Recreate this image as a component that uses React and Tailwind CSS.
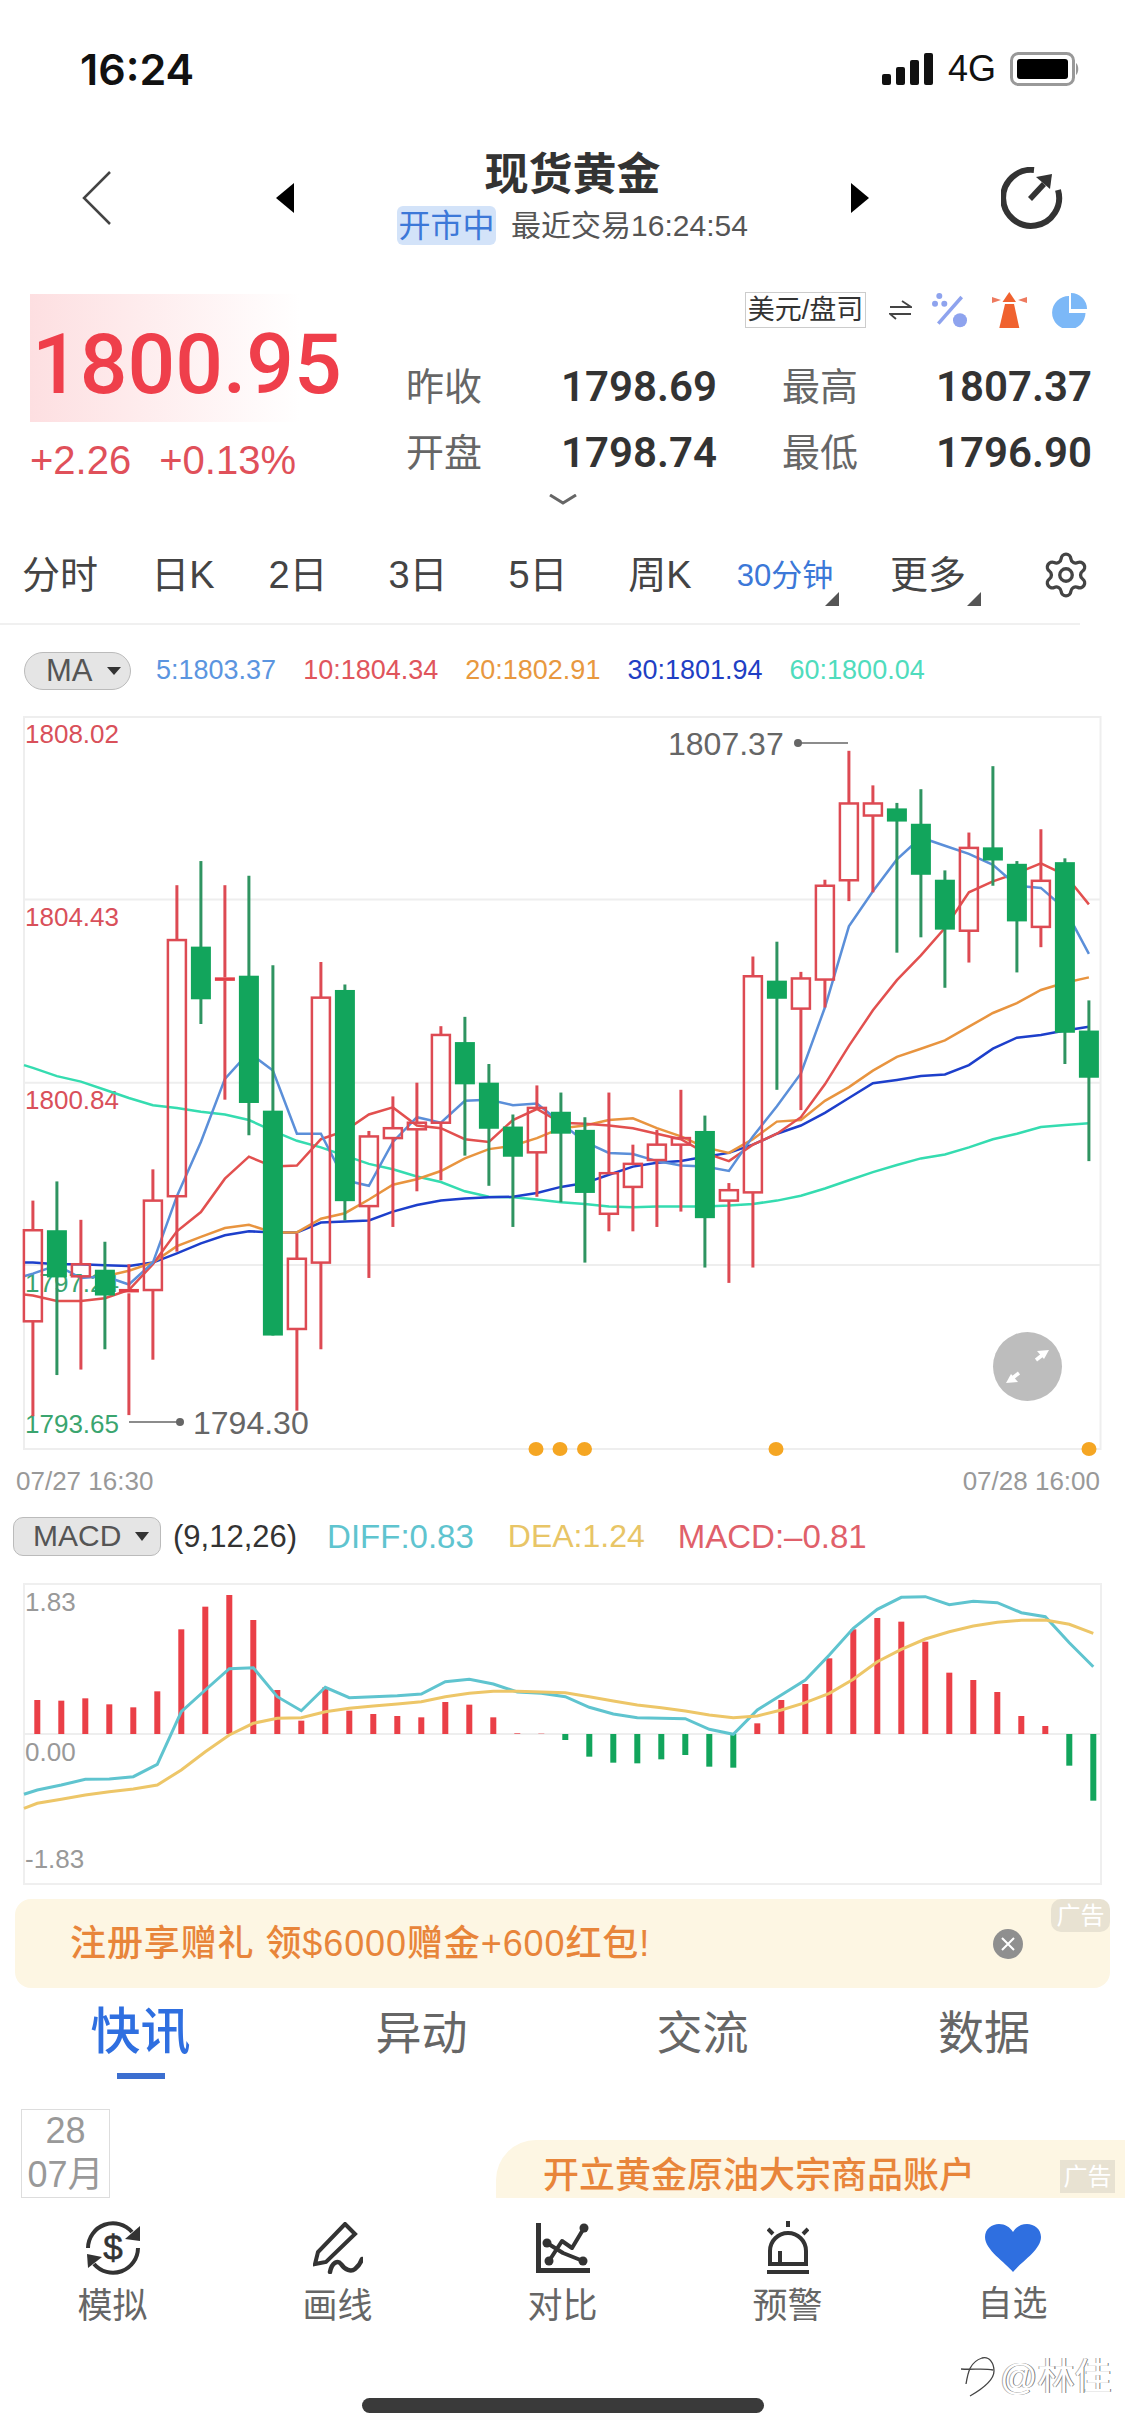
import { Settings } from "lucide-react";

// raw values are read off the 2.8x zoom of the chart, py() turns them into page pixels
const py = (z) => 640 + z / 1.823;
const cx = (i) => 32.9 + 24 * i;
const my = (z) => 1480 + z / 3;
const mx = (i) => 37.3 + 24 * i;

// [high, bodyTop, bodyBottom, low, up]
const candles = [
  [1022, 1076, 1242, 1415, 1], [987, 1076, 1162, 1340, 0], [1057, 1138, 1160, 1330, 1], [1097, 1148, 1195, 1293, 0],
  [1138, 1183, 1191, 1413, 1], [965, 1022, 1185, 1312, 1], [447, 547, 1014, 1115, 1], [403, 559, 655, 700, 0],
  [447, 615, 621, 838, 1], [430, 612, 844, 903, 0], [593, 858, 1268, 1268, 0], [1082, 1128, 1256, 1405, 1],
  [587, 652, 1135, 1293, 1], [628, 638, 1023, 1058, 0], [895, 905, 1032, 1163, 1], [832, 890, 908, 1070, 1],
  [807, 880, 892, 1005, 1], [704, 720, 880, 985, 1], [687, 733, 810, 940, 0], [773, 807, 891, 995, 0],
  [865, 887, 942, 1070, 0], [812, 853, 934, 1015, 1], [825, 860, 900, 1025, 0], [870, 893, 1008, 1135, 0],
  [825, 972, 1046, 1078, 1], [920, 955, 997, 1078, 1], [893, 920, 948, 1070, 1], [820, 908, 920, 1042, 1],
  [867, 895, 1054, 1144, 0], [990, 1003, 1022, 1172, 1], [577, 613, 1007, 1144, 1], [550, 621, 654, 820, 0],
  [605, 617, 672, 857, 1], [437, 448, 619, 670, 1], [202, 298, 438, 476, 1], [265, 298, 320, 460, 1],
  [297, 307, 331, 570, 0], [272, 335, 428, 542, 0], [420, 437, 528, 634, 0], [351, 379, 530, 588, 1],
  [230, 378, 402, 448, 0], [403, 408, 513, 606, 0], [345, 439, 523, 560, 1], [398, 405, 716, 773, 0],
  [657, 712, 798, 950, 0],
];

const ma5 = [1155, 1140, 1163, 1160, 1175, 1135, 1014, 915, 800, 752, 785, 900, 900, 985, 995, 915, 870, 880, 840, 838, 848, 845, 880, 915, 935, 937, 950, 958, 960, 968, 905, 850, 790, 670, 522, 458, 400, 360, 375, 390, 410, 448, 452, 490, 572];
const ma10 = [1195, 1205, 1205, 1200, 1185, 1138, 1078, 1043, 982, 942, 960, 958, 910, 895, 865, 852, 885, 890, 910, 915, 875, 855, 880, 882, 885, 890, 900, 910, 935, 950, 920, 900, 870, 810, 740, 675, 620, 575, 525, 460, 440, 425, 407, 428, 482];
const ma20 = [null, null, null, 1160, 1150, 1135, 1105, 1088, 1072, 1066, 1080, 1080, 1055, 1045, 1020, 993, 983, 968, 945, 928, 922, 908, 890, 885, 875, 872, 890, 905, 925, 935, 910, 878, 875, 840, 815, 785, 760, 745, 730, 705, 680, 662, 638, 625, 615];
const ma30 = [1135, 1138, 1138, 1140, 1141, 1135, 1118, 1100, 1085, 1078, 1080, 1080, 1062, 1060, 1058, 1042, 1030, 1022, 1018, 1016, 1015, 1008, 997, 990, 975, 960, 953, 950, 942, 935, 920, 900, 885, 862, 835, 808, 802, 795, 792, 775, 745, 725, 720, 712, 705];
const ma60 = [780, 795, 805, 820, 835, 848, 853, 860, 865, 875, 895, 913, 925, 940, 955, 965, 978, 988, 1005, 1015, 1016, 1020, 1025, 1028, 1033, 1034, 1033, 1033, 1033, 1031, 1028, 1022, 1013, 1000, 985, 970, 957, 945, 938, 925, 910, 900, 888, 884, 881];

const macdBars = [660, 662, 655, 673, 682, 634, 448, 380, 345, 420, 630, 722, 622, 692, 702, 708, 712, 666, 674, 712, 760, 761, 780, 830, 848, 850, 838, 825, 860, 863, 730, 660, 612, 535, 448, 414, 425, 485, 578, 600, 636, 708, 738, 857, 962];
const diff = [930, 915, 898, 897, 890, 853, 695, 630, 566, 563, 650, 692, 622, 653, 650, 647, 642, 605, 598, 612, 636, 640, 650, 682, 702, 713, 715, 716, 748, 763, 690, 645, 600, 525, 445, 388, 352, 350, 374, 364, 368, 398, 410, 488, 560];
const dea = [970, 958, 945, 935, 927, 915, 870, 815, 765, 730, 715, 713, 695, 685, 678, 672, 665, 650, 640, 634, 634, 636, 638, 650, 663, 675, 683, 693, 705, 713, 708, 690, 668, 640, 598, 545, 508, 477, 455, 438, 427, 421, 420, 433, 460];

const linePoints = (values, startY) => {
  const pts = values
    .map((v, i) => (v === null ? null : `${cx(i).toFixed(1)},${py(v).toFixed(1)}`))
    .filter(Boolean)
    .join(" ");
  return startY ? `24,${py(startY).toFixed(1)} ${pts}` : pts;
};

const macdPoints = (values, startY) =>
  `24,${my(startY).toFixed(1)} ` + values.map((v, i) => `${mx(i).toFixed(1)},${my(v).toFixed(1)}`).join(" ");

const maLegend = [
  { text: "5:1803.37", cls: "text-[#5b95e0]" },
  { text: "10:1804.34", cls: "text-[#e0555c]" },
  { text: "20:1802.91", cls: "text-[#e8983f]" },
  { text: "30:1801.94", cls: "text-[#1f3fc4]" },
  { text: "60:1800.04", cls: "text-[#4fdcbd]" },
];

const periods = [
  { label: "分时", cls: "w-[120px]" },
  { label: "日K", cls: "w-[126px]" },
  { label: "2日", cls: "w-[104px]" },
  { label: "3日", cls: "w-[136px]" },
  { label: "5日", cls: "w-[104px]" },
  { label: "周K", cls: "w-[140px]" },
];

function CornerMark({ cls }) {
  return (
    <svg width="14" height="14" viewBox="0 0 14 14" className={`absolute top-[65px] ${cls}`}>
      <polygon points="14,0 14,14 0,14" fill="#555" />
    </svg>
  );
}

function CandleChart() {
  return (
    <svg width="1125" height="750" viewBox="0 710 1125 750" className="block shrink-0">
      <rect x="24" y="717" width="1076.5" height="732" fill="none" stroke="#eeeeee" strokeWidth="2" />
      {[899.5, 1082.7, 1265].map((y) => (
        <line key={y} x1="24" x2="1100" y1={y} y2={y} stroke="#eeeeee" strokeWidth="2" />
      ))}

      <text x="25" y="743" fontSize="26" fill="#d9505a">1808.02</text>
      <text x="25" y="926" fontSize="26" fill="#d9505a">1804.43</text>
      <text x="25" y="1109" fontSize="26" fill="#d9505a">1800.84</text>
      <text x="25" y="1292" fontSize="26" fill="#3aa56f">1797.24</text>
      <text x="25" y="1433" fontSize="26" fill="#3aa56f">1793.65</text>

      <polyline points={linePoints(ma60, 775)} fill="none" stroke="#35dcb0" strokeWidth="2.5" />
      <polyline points={linePoints(ma30, 1135)} fill="none" stroke="#1d3fcb" strokeWidth="2.5" />
      <polyline points={linePoints(ma20)} fill="none" stroke="#e8943f" strokeWidth="2.5" />
      <polyline points={linePoints(ma10, 1193)} fill="none" stroke="#e2504f" strokeWidth="2.5" />
      <polyline points={linePoints(ma5, 1160)} fill="none" stroke="#5b8fd9" strokeWidth="2.5" />

      {candles.map(([high, top, bottom, low, up], i) => {
        const x = cx(i);
        if (up) {
          const flat = bottom - top < 10;
          return (
            <g key={i} stroke="#dd4a53">
              <line x1={x} x2={x} y1={py(high)} y2={py(top)} strokeWidth="3" />
              <line x1={x} x2={x} y1={py(bottom)} y2={py(low)} strokeWidth="3" />
              {flat ? (
                <rect x={x - 10} y={py(top)} width="20" height="3.5" fill="#e23f48" stroke="none" />
              ) : (
                <rect x={x - 9} y={py(top)} width="18" height={py(bottom) - py(top)} fill="none" strokeWidth="2.5" />
              )}
            </g>
          );
        }
        return (
          <g key={i}>
            <line x1={x} x2={x} y1={py(high)} y2={py(low)} stroke="#2f9461" strokeWidth="3" />
            <rect x={x - 10} y={py(top)} width="20" height={py(bottom) - py(top)} fill="#12a55c" />
          </g>
        );
      })}

      <line x1="129" x2="177" y1="1422" y2="1422" stroke="#666" strokeWidth="1.5" />
      <circle cx="180" cy="1422" r="4" fill="#666" />
      <text x="193" y="1434" fontSize="32" fill="#666">1794.30</text>

      <text x="668" y="755" fontSize="32" fill="#666">1807.37</text>
      <circle cx="798" cy="743" r="4" fill="#666" />
      <line x1="800" x2="848" y1="743" y2="743" stroke="#666" strokeWidth="1.5" />

      {[536, 560, 584.5, 776, 1089].map((x) => (
        <ellipse key={x} cx={x} cy="1449" rx="7.5" ry="7" fill="#f5a623" />
      ))}

      <circle cx="1027.5" cy="1366.5" r="34.5" fill="#bdbdbd" />
      <g stroke="#fff" strokeWidth="3.5" fill="#fff">
        <line x1="1036" y1="1360" x2="1045" y2="1353" />
        <polygon points="1049,1350 1037,1351 1044,1359" stroke="none" />
        <line x1="1019" y1="1373" x2="1010" y2="1380" />
        <polygon points="1006,1383 1018,1382 1011,1374" stroke="none" />
      </g>
    </svg>
  );
}

function MacdChart() {
  return (
    <svg width="1125" height="325" viewBox="0 1570 1125 325" className="block shrink-0">
      <rect x="24" y="1584" width="1077" height="300" fill="none" stroke="#efefef" strokeWidth="2" />
      <line x1="24" x2="1100" y1="1734" y2="1734" stroke="#eeeeee" strokeWidth="2" />
      <text x="25" y="1611" fontSize="26" fill="#999">1.83</text>
      <text x="25" y="1761" fontSize="26" fill="#999">0.00</text>
      <text x="25" y="1868" fontSize="26" fill="#999">-1.83</text>

      {macdBars.map((v, i) => {
        const up = v < 762;
        const top = up ? my(v) : 1734;
        const height = up ? 1734 - my(v) : my(v) - 1734;
        return <rect key={i} x={mx(i) - 3} y={top} width="6" height={height} fill={up ? "#ea3f47" : "#12a55c"} />;
      })}

      <polyline points={macdPoints(diff, 943)} fill="none" stroke="#5fc4cf" strokeWidth="3" />
      <polyline points={macdPoints(dea, 985)} fill="none" stroke="#edc668" strokeWidth="3" />
    </svg>
  );
}

function IconSim() {
  return (
    <svg width="54" height="54" viewBox="0 0 54 54" fill="none" stroke="#333" strokeWidth="4">
      <path d="M2 27 A25 25 0 0 1 46 11" />
      <polygon points="54,5 54,20 39,18" fill="#333" stroke="none" />
      <path d="M52 27 A25 25 0 0 1 8 43" />
      <polygon points="1,33 16,36 2,47" fill="#333" stroke="none" />
      <text x="27" y="39" fontSize="35" fill="#333" stroke="#333" strokeWidth="0.6" textAnchor="middle">$</text>
    </svg>
  );
}

function IconPen() {
  return (
    <svg width="50" height="52" viewBox="0 0 50 52" fill="none" stroke="#333" strokeWidth="4">
      <path d="M32 2 L42 12 L13 40 L2 42 L5 30 Z" />
      <path d="M17 50 C19 40 25 38 28 42 C32 48 38 50 42 47 C46 44 48 40 49 37" strokeWidth="4.5" strokeLinecap="round" />
    </svg>
  );
}

function IconCompare() {
  return (
    <svg width="54" height="50" viewBox="0 0 54 50" fill="none" stroke="#333">
      <path d="M2.5 0 V47.5 H54" strokeWidth="5" />
      <g strokeWidth="4" strokeLinejoin="round">
        <polyline points="11,20 27,30 47,38" />
        <polyline points="13,38 26,18 36,25 48,5" />
      </g>
      <g fill="#333" stroke="none">
        <circle cx="11" cy="20" r="4.5" />
        <circle cx="47" cy="38" r="4.5" />
        <circle cx="13" cy="38" r="4.5" />
        <circle cx="48" cy="5" r="4.5" />
      </g>
    </svg>
  );
}

function IconAlarm() {
  return (
    <svg width="42" height="54" viewBox="0 0 42 54" fill="none" stroke="#333" strokeWidth="4">
      <path d="M21 0 V6 M1 8 L6 13 M41 8 L36 13" />
      <path d="M3 43 V30 A18 18 0 0 1 39 30 V43 Z" />
      <path d="M13 43 V30" />
      <path d="M0 51 H42" />
    </svg>
  );
}

function IconHeart() {
  return (
    <svg width="56" height="48" viewBox="0 0 56 48">
      <path d="M28 48 C20 38 0 26 0 13 C0 5 7 0 14 0 C20 0 25 3 28 8 C31 3 36 0 42 0 C49 0 56 5 56 13 C56 26 36 38 28 48 Z" fill="#2f6fe0" />
    </svg>
  );
}

const bottomTabs = [
  { label: "模拟", Icon: IconSim, cls: "mt-[9px]" },
  { label: "画线", Icon: IconPen, cls: "mt-[9px]" },
  { label: "对比", Icon: IconCompare, cls: "mt-[9px]" },
  { label: "预警", Icon: IconAlarm, cls: "mt-[9px]" },
  { label: "自选", Icon: IconHeart, cls: "mt-[7px]" },
];

export default function App() {
  return (
    <div className="relative flex h-[2436px] w-[1125px] flex-col overflow-hidden bg-white font-['Liberation_Sans','Noto_Sans_CJK_SC',sans-serif]">
      {/* Status bar */}
      <div className="flex h-[138px] shrink-0 items-center pl-[80px] pr-[45px]">
        <span className="font-['Inter'] text-[43px] font-semibold leading-none text-[#111]">16:24</span>
        <div className="ml-auto flex items-center">
          <svg width="52" height="32" viewBox="0 0 52 32" fill="#111">
            <rect x="0" y="21" width="9" height="11" rx="2" />
            <rect x="14" y="14" width="9" height="18" rx="2" />
            <rect x="28" y="7" width="9" height="25" rx="2" />
            <rect x="42" y="0" width="9" height="32" rx="2" />
          </svg>
          <span className="ml-[14px] text-[36px] leading-none text-[#111]">4G</span>
          <svg className="ml-[14px]" width="70" height="34" viewBox="0 0 70 34">
            <rect x="1.5" y="1.5" width="62" height="31" rx="7" fill="none" stroke="#999" strokeWidth="3" />
            <rect x="7" y="7" width="51" height="20" rx="3" fill="#000" />
            <path d="M66 11 C69 13 69 21 66 23 Z" fill="#999" />
          </svg>
        </div>
      </div>

      {/* Nav */}
      <div className="flex h-[124px] shrink-0 items-start">
        <svg className="ml-[82px] mt-[33px]" width="30" height="54" viewBox="0 0 30 54" fill="none" stroke="#444" strokeWidth="2.5">
          <polyline points="28,1 2,27 28,53" />
        </svg>
        <svg className="ml-[164px] mt-[45px]" width="18" height="30" viewBox="0 0 18 30">
          <polygon points="18,0 18,30 0,15" fill="#000" />
        </svg>
        <div className="flex w-[557px] flex-col items-center">
          <span className="mt-[12px] text-[44px] font-bold leading-[50px] text-[#333]">现货黄金</span>
          <div className="mt-[6px] flex items-center">
            <span className="flex h-[39px] w-[99px] items-center justify-center rounded-[6px] bg-[#d3e3f9] text-[32px] leading-none text-[#3c78d8]">开市中</span>
            <span className="ml-[15px] text-[30px] leading-none text-[#555]">最近交易16:24:54</span>
          </div>
        </div>
        <svg className="mt-[45px]" width="18" height="30" viewBox="0 0 18 30">
          <polygon points="0,0 0,30 18,15" fill="#000" />
        </svg>
        <svg className="ml-[132px] mt-[29px]" width="62" height="62" viewBox="0 0 62 62" fill="none" stroke="#333" strokeWidth="6">
          <path d="M33 3 A28 28 0 1 0 57 23" />
          <path d="M29 32 L43 17" strokeWidth="5.5" />
          <polygon points="51,7 35,10 49,22" fill="#333" stroke="none" />
        </svg>
      </div>

      {/* Quote */}
      <div className="flex h-[243px] shrink-0">
        <div className="w-[345px] shrink-0 pl-[30px] pt-[32px]">
          <div className="flex h-[128px] w-[270px] items-center whitespace-nowrap bg-gradient-to-r from-[#fddfe1] to-white pl-[2px] pt-[14px] font-['Roboto'] text-[84px] font-medium leading-none text-[#ef3f4b]">
            1800.95
          </div>
          <div className="flex h-[76px] items-center text-[40px] leading-none text-[#e0505a]">
            <span>+2.26</span>
            <span className="ml-[28px]">+0.13%</span>
          </div>
        </div>
        <div className="flex flex-1 flex-col">
          <div className="flex items-center justify-end pr-[38px] pt-[29px]">
            <span className="flex h-[36px] w-[121px] items-center justify-center border border-[#cccccc] text-[27px] leading-none text-[#333]">美元/盘司</span>
            <svg className="ml-[23px]" width="23" height="20" viewBox="0 0 23 20" fill="none" stroke="#444" strokeWidth="1.8">
              <path d="M1 7 H22 L13 1" />
              <path d="M22 14 H1 L7 19" />
            </svg>
            <svg className="ml-[18px]" width="40" height="36" viewBox="0 0 40 36" fill="#8ea3ee">
              <circle cx="9.3" cy="4" r="3" />
              <circle cx="5" cy="11.7" r="3" />
              <circle cx="14.3" cy="11.7" r="3" />
              <line x1="31.7" y1="5" x2="8.3" y2="31.7" stroke="#8ea3ee" strokeWidth="3.5" />
              <circle cx="30" cy="28.3" r="7" />
            </svg>
            <svg className="ml-[20px]" width="40" height="38" viewBox="0 0 40 38">
              <polygon points="2,6 2,12 11,9" fill="#ee7a5e" />
              <polygon points="37,6 37,12 28,9" fill="#ee7a5e" />
              <polygon points="19.3,1 26,11 12.5,11" fill="#f0622f" />
              <polygon points="15,13 24,13 29.3,37 9.3,37" fill="#f0622f" />
            </svg>
            <svg className="ml-[22px]" width="35" height="35" viewBox="0 0 35 35">
              <path d="M17 3 A16.7 16.7 0 1 0 33.5 20 H17 Z" fill="#7cb8f7" />
              <path d="M19 0 A16 16 0 0 1 35 16 H19 Z" fill="#7cb8f7" />
            </svg>
          </div>
          <div className="ml-[61px] mt-[25px] grid w-[686px] grid-cols-[311px_310px] gap-x-[65px]">
            {[
              ["昨收", "1798.69"],
              ["最高", "1807.37"],
              ["开盘", "1798.74"],
              ["最低", "1796.90"],
            ].map(([label, value]) => (
              <div key={label} className="flex h-[66px] items-center justify-between">
                <span className="text-[38px] leading-none text-[#666]">{label}</span>
                <span className="font-['Roboto'] text-[42px] font-semibold leading-none text-[#333]">{value}</span>
              </div>
            ))}
          </div>
          <svg className="ml-[204px] mt-[8px]" width="28" height="11" viewBox="0 0 28 11" fill="none" stroke="#666" strokeWidth="3">
            <polyline points="1,1 14,9 27,1" />
          </svg>
        </div>
      </div>

      {/* Period tabs */}
      <div className="flex h-[120px] shrink-0 flex-col">
        <div className="flex flex-1 items-center pt-[22px] text-[38px] leading-none text-[#444]">
          {periods.map((p) => (
            <span key={p.label} className={`text-center ${p.cls}`}>{p.label}</span>
          ))}
          <span className="relative w-[110px] self-stretch">
            <span className="flex h-full items-center justify-center text-[31px] text-[#3c78d8]">30分钟</span>
            <CornerMark cls="right-[1px]" />
          </span>
          <span className="relative w-[176px] self-stretch">
            <span className="flex h-full items-center justify-center">更多</span>
            <CornerMark cls="left-[127px]" />
          </span>
          <span className="flex w-[100px] justify-center">
            <Settings size={50} strokeWidth={1.6} color="#444" />
          </span>
        </div>
        <div className="h-[2px] w-[1080px] bg-[#f0f0f0]" />
      </div>

      {/* MA legend */}
      <div className="flex h-[85px] shrink-0 items-center pl-[24px] pt-[6px]">
        <div className="flex h-[38px] w-[107px] items-center rounded-full border border-[#bbbbbb] bg-[#e5e5e5] pl-[21px]">
          <span className="text-[31px] leading-none text-[#555]">MA</span>
          <svg className="ml-[14px]" width="14" height="8" viewBox="0 0 14 8">
            <polygon points="0,0 14,0 7,8" fill="#333" />
          </svg>
        </div>
        <div className="ml-[25px] flex gap-x-[27px] text-[27px] leading-none">
          {maLegend.map((m) => (
            <span key={m.text} className={m.cls}>{m.text}</span>
          ))}
        </div>
      </div>

      <CandleChart />

      <div className="flex h-[42px] shrink-0 items-center justify-between pl-[16px] pr-[25px] text-[26px] leading-none text-[#999]">
        <span>07/27 16:30</span>
        <span>07/28 16:00</span>
      </div>

      {/* MACD legend */}
      <div className="flex h-[68px] shrink-0 items-center pl-[13px]">
        <div className="flex h-[39px] w-[148px] items-center rounded-[10px] border border-[#bbbbbb] bg-[#e5e5e5] pl-[19px]">
          <span className="text-[30px] leading-none text-[#555]">MACD</span>
          <svg className="ml-[14px]" width="14" height="9" viewBox="0 0 14 9">
            <polygon points="0,0 14,0 7,9" fill="#333" />
          </svg>
        </div>
        <span className="ml-[12px] text-[31px] leading-none text-[#333]">(9,12,26)</span>
        <span className="ml-[30px] text-[33px] leading-none text-[#5fc4cf]">DIFF:0.83</span>
        <span className="ml-[34px] text-[32px] leading-none text-[#e8c566]">DEA:1.24</span>
        <span className="ml-[33px] text-[33px] leading-none text-[#e0606a]">MACD:–0.81</span>
      </div>

      <MacdChart />

      {/* Banner ad */}
      <div className="relative mx-[15px] mt-[4px] flex h-[89px] shrink-0 items-center rounded-[16px] bg-[#fdf6e3] pl-[55px]">
        <span className="whitespace-nowrap text-[36px] font-medium leading-none tracking-[0.9px] text-[#e8853a]">注册享赠礼 领$6000赠金+600红包!</span>
        <span className="absolute left-[978px] top-[30px] flex h-[30px] w-[30px] items-center justify-center rounded-full bg-[#8f8f8f]">
          <svg width="14" height="14" viewBox="0 0 14 14" stroke="#fff" strokeWidth="2">
            <path d="M1 1 L13 13 M13 1 L1 13" />
          </svg>
        </span>
        <span className="absolute right-0 top-0 flex h-[33px] w-[59px] items-center justify-center rounded-[10px] bg-[#e8e2d2] text-[24px] leading-none text-white">广告</span>
      </div>

      {/* Content tabs */}
      <div className="grid h-[102px] shrink-0 grid-cols-[281px_281px_281px_282px] text-[46px] leading-none text-[#666]">
        <div className="relative flex flex-col items-center pt-[19px]">
          <span className="text-[50px] font-medium text-[#2f6fe0]">快讯</span>
          <span className="mt-[16px] h-[6px] w-[48px] bg-[#3c6fd0]" />
        </div>
        <div className="flex justify-center pt-[22px]">异动</div>
        <div className="flex justify-center pt-[22px]">交流</div>
        <div className="flex justify-center pt-[22px]">数据</div>
      </div>

      {/* News row, cut off by the bottom bar */}
      <div className="flex h-[108px] shrink-0 overflow-hidden">
        <div className="ml-[21px] mt-[19px] flex h-[89px] w-[89px] shrink-0 flex-col items-center border border-[#dddddd] text-[36px] leading-none text-[#999]">
          <span className="mt-[1px] leading-[40px]">28</span>
          <span className="mt-[3px] leading-[42px]">07月</span>
        </div>
        <div className="relative ml-[386px] mt-[50px] flex h-[58px] flex-1 items-start rounded-tl-[40px] bg-[#fdf6e3] pl-[47px] pt-[18px]">
          <span className="whitespace-nowrap text-[36px] font-medium leading-none text-[#e8853a]">开立黄金原油大宗商品账户</span>
          <span className="absolute left-[564px] top-[20px] flex h-[33px] w-[55px] items-center justify-center bg-[#e8e2d2] text-[24px] leading-none text-white">广告</span>
        </div>
      </div>

      {/* Bottom bar */}
      <div className="flex flex-1 flex-col items-center pt-[23px]">
        <div className="grid w-full grid-cols-5">
          {bottomTabs.map(({ label, Icon, cls }) => (
            <div key={label} className="flex flex-col items-center">
              <div className="flex h-[54px] items-center">
                <Icon />
              </div>
              <span className={`text-[35px] leading-[44px] text-[#666] ${cls}`}>{label}</span>
            </div>
          ))}
        </div>
        <div className="mt-[70px] h-[15px] w-[402px] rounded-full bg-[#3a3a3a]" />
      </div>

      {/* Watermark */}
      <div className="absolute left-[960px] top-[2356px] flex items-center whitespace-nowrap text-[37px] leading-none text-white [text-shadow:1px_0_0_#777,-1px_0_0_#aaa]">
        <svg width="36" height="42" viewBox="0 0 36 42" fill="none" stroke="#444" strokeWidth="1.3">
          <path d="M6 28 C8 16 10 6 22 2 C30 0 34 8 34 15 C34 24 24 32 10 40" />
          <path d="M1 13 C12 14 24 12 33 14" />
        </svg>
        <span className="ml-[4px]">@林佳</span>
      </div>
    </div>
  );
}
